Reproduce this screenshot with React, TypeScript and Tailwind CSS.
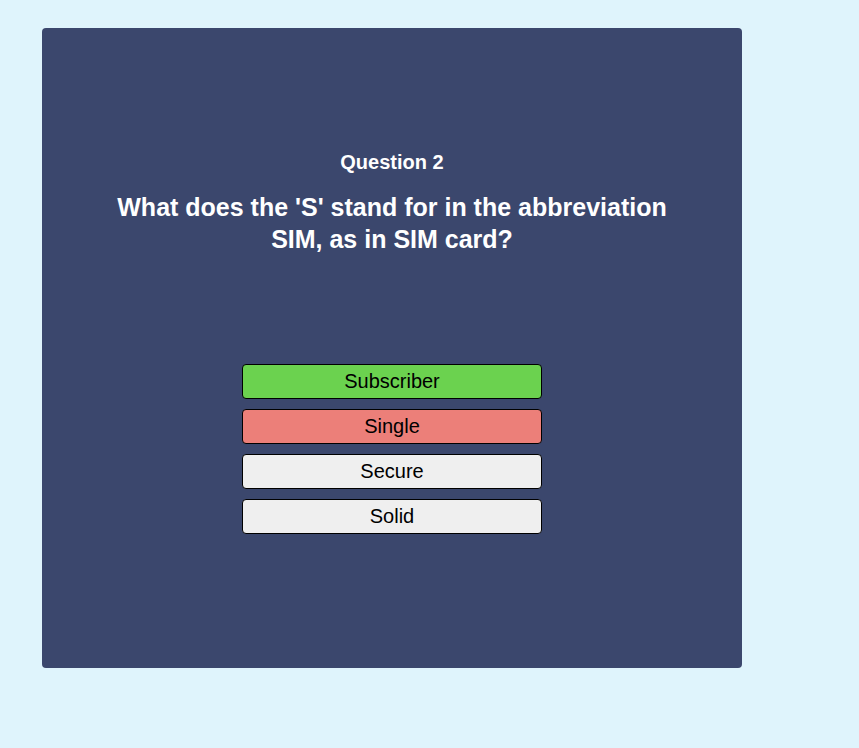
const answers = [
  { text: "Subscriber", state: "correct" },
  { text: "Single", state: "wrong" },
  { text: "Secure", state: "idle" },
  { text: "Solid", state: "idle" },
]

export default function App() {
  return (
    <div className="min-h-screen w-full bg-[#dff4fc] pl-[42px] pt-[28px] font-['Liberation_Sans',Arial,sans-serif]">
      <div className="flex h-[640px] w-[700px] flex-col items-center rounded-[4px] bg-[#3b476d] text-white">
        <div className="mt-[123px] flex w-[580px] flex-col items-center text-center">
          <h2 className="text-[20px] font-bold leading-[23px]">Question 2</h2>
          <p className="mt-[17px] text-[25px] font-bold leading-[32px]">
            What does the 'S' stand for in the abbreviation SIM, as in SIM card?
          </p>
        </div>
        <div className="mt-[109px] flex w-[300px] flex-col gap-[10px]">
          {answers.map((a) => (
            <button
              key={a.text}
              className={
                "h-[35px] w-full rounded-[4px] border border-black pb-[2px] text-[20px] text-black " +
                (a.state === "correct"
                  ? "bg-[#6bd24f]"
                  : a.state === "wrong"
                  ? "bg-[#ec7f79]"
                  : "bg-[#efefef]")
              }
            >
              {a.text}
            </button>
          ))}
        </div>
      </div>
    </div>
  )
}
